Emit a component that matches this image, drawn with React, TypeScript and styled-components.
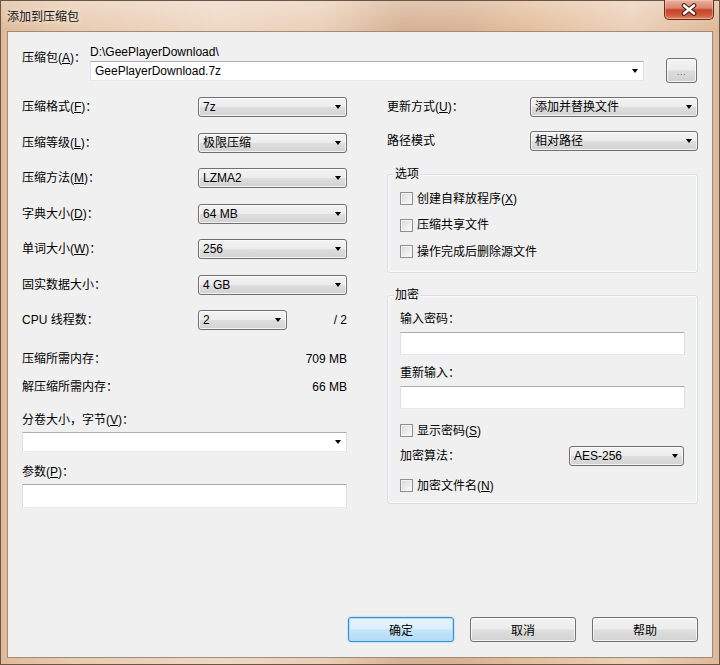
import React from "react";
import styled, { createGlobalStyle } from "styled-components";

const GlobalStyle = createGlobalStyle`
  html, body {
    margin: 0;
    padding: 0;
    background: #fff;
  }
  body {
    font-family: "Liberation Sans", "Noto Sans CJK SC", sans-serif;
    font-size: 12px;
    color: #000;
  }
  u {
    text-decoration: underline;
    text-underline-offset: 1px;
  }
`;

const Window = styled.div`
  width: 720px;
  height: 665px;
  box-sizing: border-box;
  display: flex;
  flex-direction: column;
  padding: 0 6px 6px;
  border: 1px solid #6a5646;
  background:
    linear-gradient(180deg, rgba(255, 255, 255, 0.28) 0px, rgba(255, 255, 255, 0) 30px),
    linear-gradient(
      90deg,
      #dfba99 0%,
      #e8cbb0 10%,
      #eed8c4 30%,
      #eacfb7 45%,
      #d6b193 56%,
      #d9b293 64%,
      #e4bf9e 74%,
      #ebd0b8 88%,
      #ddb998 100%
    );
`;

const TitleBar = styled.div`
  height: 30px;
  display: flex;
  justify-content: space-between;
  align-items: flex-start;
  flex-shrink: 0;
`;

const Title = styled.div`
  margin-top: 7px;
  line-height: 16px;
  font-family: "Noto Sans CJK SC", sans-serif;
  font-size: 12px;
  color: #111;
  text-shadow: 0 0 6px rgba(255, 255, 255, 0.9);
`;

const CloseButton = styled.div`
  width: 50px;
  height: 20px;
  margin-top: -1px;
  margin-right: -1px;
  box-sizing: border-box;
  display: flex;
  align-items: center;
  justify-content: center;
  border: 1px solid #6b2a1c;
  border-top: none;
  border-radius: 0 0 5px 5px;
  background: linear-gradient(180deg, #eab2a3 0%, #db8670 42%, #c6442a 52%, #cf5a3a 80%, #e08a6a 100%);
  box-shadow: inset 0 0 0 1px rgba(255, 210, 190, 0.5);
`;

const Client = styled.div`
  flex: 1;
  display: flex;
  flex-direction: column;
  padding: 13px 14px 15px;
  background: #f0f0f0;
  border: 1px solid #a08b77;
`;

const ArchiveRow = styled.div`
  display: flex;
  align-items: flex-start;
  height: 36px;
`;

const ArchiveLabel = styled.div`
  width: 68px;
  margin-top: 5px;
  line-height: 16px;
  white-space: nowrap;
`;

const ArchiveField = styled.div`
  width: 554px;
  display: flex;
  flex-direction: column;
`;

const PathText = styled.div`
  height: 15px;
  line-height: 15px;
  margin-bottom: 1px;
  white-space: nowrap;
`;

const BrowseButton = styled.div`
  width: 31px;
  height: 25px;
  margin-left: 22px;
  margin-top: 13px;
  box-sizing: border-box;
  display: flex;
  align-items: flex-end;
  justify-content: center;
  padding-bottom: 5px;
  border: 1px solid #707070;
  border-radius: 3px;
  background: linear-gradient(180deg, #f4f4f4 0%, #ececec 48%, #dddddd 52%, #d0d0d0 100%);
  box-shadow: inset 0 0 0 1px rgba(255, 255, 255, 0.75);
  font-size: 9px;
  line-height: 9px;
  color: #666;
  letter-spacing: 0.5px;
`;

const Columns = styled.div`
  margin-top: 16px;
  display: flex;
  justify-content: space-between;
  align-items: flex-start;
`;

const Column = styled.div<{ $w: number }>`
  width: ${(p) => p.$w}px;
  display: flex;
  flex-direction: column;
`;

const ComboList = styled.div<{ $gap: number }>`
  display: flex;
  flex-direction: column;
  gap: ${(p) => p.$gap}px;
`;

const FieldRow = styled.div<{ $label: number; $mt?: number }>`
  display: grid;
  grid-template-columns: ${(p) => p.$label}px auto 1fr;
  align-items: center;
  height: 20px;
  margin-top: ${(p) => p.$mt ?? 0}px;
`;

const Label = styled.div<{ $mt?: number }>`
  height: 16px;
  line-height: 16px;
  white-space: nowrap;
  margin-top: ${(p) => p.$mt ?? 0}px;
`;

const Suffix = styled.div`
  line-height: 16px;
  text-align: right;
  white-space: nowrap;
`;

const Combo = styled.div<{ $w?: number; $editable?: boolean; $mt?: number }>`
  box-sizing: border-box;
  height: 20px;
  width: ${(p) => (p.$w ? `${p.$w}px` : "100%")};
  margin-top: ${(p) => p.$mt ?? 0}px;
  display: flex;
  align-items: center;
  padding-left: 4px;
  border: 1px solid;
  border-color: ${(p) => (p.$editable ? "#abadb3 #dbdfe6 #e3e9ef #dbdfe6" : "#707070")};
  border-radius: ${(p) => (p.$editable ? "1px" : "3px")};
  background: ${(p) =>
    p.$editable
      ? "#fff"
      : "linear-gradient(180deg, #f3f3f3 0%, #ececec 48%, #dedede 52%, #d2d2d2 100%)"};
  box-shadow: ${(p) => (p.$editable ? "none" : "inset 0 0 0 1px rgba(255, 255, 255, 0.7)")};
`;

const ComboText = styled.span`
  flex: 1;
  line-height: 16px;
  white-space: nowrap;
  overflow: hidden;
`;

const ComboArrow = styled.span`
  width: 0;
  height: 0;
  margin-right: 5px;
  border-left: 3.5px solid transparent;
  border-right: 3.5px solid transparent;
  border-top: 4px solid #000;
`;

const InfoList = styled.div`
  margin-top: 21px;
  display: flex;
  flex-direction: column;
  gap: 11.5px;
`;

const InfoRow = styled.div`
  display: flex;
  justify-content: space-between;
  height: 16px;
  line-height: 16px;
`;

const TextBox = styled.div<{ $h: number; $mt?: number }>`
  box-sizing: border-box;
  height: ${(p) => p.$h}px;
  width: 100%;
  margin-top: ${(p) => p.$mt ?? 0}px;
  background: #fff;
  border: 1px solid;
  border-color: #abadb3 #dbdfe6 #e3e9ef #dbdfe6;
  border-radius: 1px;
`;

const GroupBox = styled.div<{ $mt: number; $pt: number; $pb: number }>`
  position: relative;
  margin-top: ${(p) => p.$mt}px;
  padding: ${(p) => p.$pt}px 12px ${(p) => p.$pb}px;
  border: 1px solid #d5dfe5;
  border-radius: 3px;
  box-shadow: inset 0 0 0 1px #fbfbfb;
  display: flex;
  flex-direction: column;
`;

const GroupTitle = styled.div`
  position: absolute;
  top: -9px;
  left: 6px;
  padding: 0 1px;
  line-height: 16px;
  background: #f0f0f0;
`;

const CheckList = styled.div`
  display: flex;
  flex-direction: column;
  gap: 10.7px;
`;

const CheckRow = styled.div<{ $mt?: number }>`
  display: flex;
  align-items: center;
  gap: 4px;
  height: 16px;
  line-height: 16px;
  margin-top: ${(p) => p.$mt ?? 0}px;
  white-space: nowrap;
`;

const CheckBox = styled.span`
  width: 13px;
  height: 13px;
  box-sizing: border-box;
  border: 1px solid #8e8f8f;
  background: linear-gradient(135deg, #d6d6d6 0%, #ececec 55%, #fbfbfb 100%);
  box-shadow: inset 0 0 0 1px #f4f4f4;
  flex-shrink: 0;
`;

const Spacer = styled.div`
  flex: 1;
`;

const ButtonRow = styled.div`
  display: flex;
  justify-content: flex-end;
  gap: 16px;
`;

const DialogButton = styled.div<{ $default?: boolean }>`
  width: 106px;
  height: 25px;
  box-sizing: border-box;
  display: flex;
  align-items: center;
  justify-content: center;
  border: 1px solid ${(p) => (p.$default ? "#3c8ccd" : "#707070")};
  border-radius: 3px;
  background: ${(p) =>
    p.$default
      ? "linear-gradient(180deg, #e8f5fc 0%, #d9effb 48%, #c4e6fa 52%, #b1dbf4 100%)"
      : "linear-gradient(180deg, #f3f3f3 0%, #ececec 48%, #dedede 52%, #d2d2d2 100%)"};
  box-shadow: ${(p) =>
    p.$default
      ? "inset 0 0 0 1px #a6e0ff, 0 0 2px rgba(60, 160, 230, 0.5)"
      : "inset 0 0 0 1px rgba(255, 255, 255, 0.75)"};
  line-height: 16px;
  font-family: "Noto Sans CJK SC", sans-serif;
`;

const Dropdown = ({
  value,
  w,
  editable,
  mt,
}: {
  value?: string;
  w?: number;
  editable?: boolean;
  mt?: number;
}) => (
  <Combo $w={w} $editable={editable} $mt={mt}>
    <ComboText>{value}</ComboText>
    <ComboArrow />
  </Combo>
);

const Check = ({ children, mt }: { children: React.ReactNode; mt?: number }) => (
  <CheckRow $mt={mt}>
    <CheckBox />
    <span>{children}</span>
  </CheckRow>
);

const leftCombos: Array<{ label: React.ReactNode; value: string }> = [
  { label: <>压缩格式(<u>F</u>)：</>, value: "7z" },
  { label: <>压缩等级(<u>L</u>)：</>, value: "极限压缩" },
  { label: <>压缩方法(<u>M</u>)：</>, value: "LZMA2" },
  { label: <>字典大小(<u>D</u>)：</>, value: "64 MB" },
  { label: <>单词大小(<u>W</u>)：</>, value: "256" },
  { label: <>固实数据大小：</>, value: "4 GB" },
];

const options: Array<React.ReactNode> = [
  <>创建自释放程序(<u>X</u>)</>,
  <>压缩共享文件</>,
  <>操作完成后删除源文件</>,
];

const App = () => {
  return (
    <>
      <GlobalStyle />
      <Window>
        <TitleBar>
          <Title>添加到压缩包</Title>
          <CloseButton>
            <svg width="16" height="13" viewBox="0 0 16 13">
              <path d="M3 2.5 L13 10.5 M13 2.5 L3 10.5" stroke="#3b1b12" strokeWidth="4.6" strokeLinecap="round" />
              <path d="M3 2.5 L13 10.5 M13 2.5 L3 10.5" stroke="#fff" strokeWidth="2.6" strokeLinecap="round" />
            </svg>
          </CloseButton>
        </TitleBar>

        <Client>
          <ArchiveRow>
            <ArchiveLabel>压缩包(<u>A</u>)：</ArchiveLabel>
            <ArchiveField>
              <PathText>D:\GeePlayerDownload\</PathText>
              <Dropdown value="GeePlayerDownload.7z" editable />
            </ArchiveField>
            <BrowseButton>...</BrowseButton>
          </ArchiveRow>

          <Columns>
            <Column $w={325}>
              <ComboList $gap={15.5}>
                {leftCombos.map((item, index) => (
                  <FieldRow $label={176} key={index}>
                    <Label>{item.label}</Label>
                    <Dropdown value={item.value} w={149} />
                  </FieldRow>
                ))}
                <FieldRow $label={176}>
                  <Label>CPU 线程数：</Label>
                  <Dropdown value="2" w={89} />
                  <Suffix>/ 2</Suffix>
                </FieldRow>
              </ComboList>

              <InfoList>
                <InfoRow>
                  <span>压缩所需内存：</span>
                  <span>709 MB</span>
                </InfoRow>
                <InfoRow>
                  <span>解压缩所需内存：</span>
                  <span>66 MB</span>
                </InfoRow>
              </InfoList>

              <Label $mt={17.5}>分卷大小，字节(<u>V</u>)：</Label>
              <Dropdown editable mt={4} />
              <Label $mt={11.5}>参数(<u>P</u>)：</Label>
              <TextBox $h={24} $mt={4.5} />
            </Column>

            <Column $w={311}>
              <FieldRow $label={143}>
                <Label>更新方式(<u>U</u>)：</Label>
                <Dropdown value="添加并替换文件" w={168} />
              </FieldRow>
              <FieldRow $label={143} $mt={14}>
                <Label>路径模式</Label>
                <Dropdown value="相对路径" w={168} />
              </FieldRow>

              <GroupBox $mt={22.5} $pt={16} $pb={12.5}>
                <GroupTitle>选项</GroupTitle>
                <CheckList>
                  {options.map((text, index) => (
                    <Check key={index}>{text}</Check>
                  ))}
                </CheckList>
              </GroupBox>

              <GroupBox $mt={22} $pt={15} $pb={9}>
                <GroupTitle>加密</GroupTitle>
                <Label>输入密码：</Label>
                <TextBox $h={23} $mt={5} />
                <Label $mt={9.5}>重新输入：</Label>
                <TextBox $h={23} $mt={5.5} />
                <Check mt={13.5}>
                  显示密码(<u>S</u>)
                </Check>
                <FieldRow $label={169} $mt={7.5}>
                  <Label>加密算法：</Label>
                  <Dropdown value="AES-256" w={115} />
                </FieldRow>
                <Check mt={11.5}>
                  加密文件名(<u>N</u>)
                </Check>
              </GroupBox>
            </Column>
          </Columns>

          <Spacer />

          <ButtonRow>
            <DialogButton $default>确定</DialogButton>
            <DialogButton>取消</DialogButton>
            <DialogButton>帮助</DialogButton>
          </ButtonRow>
        </Client>
      </Window>
    </>
  );
};

export default App;
